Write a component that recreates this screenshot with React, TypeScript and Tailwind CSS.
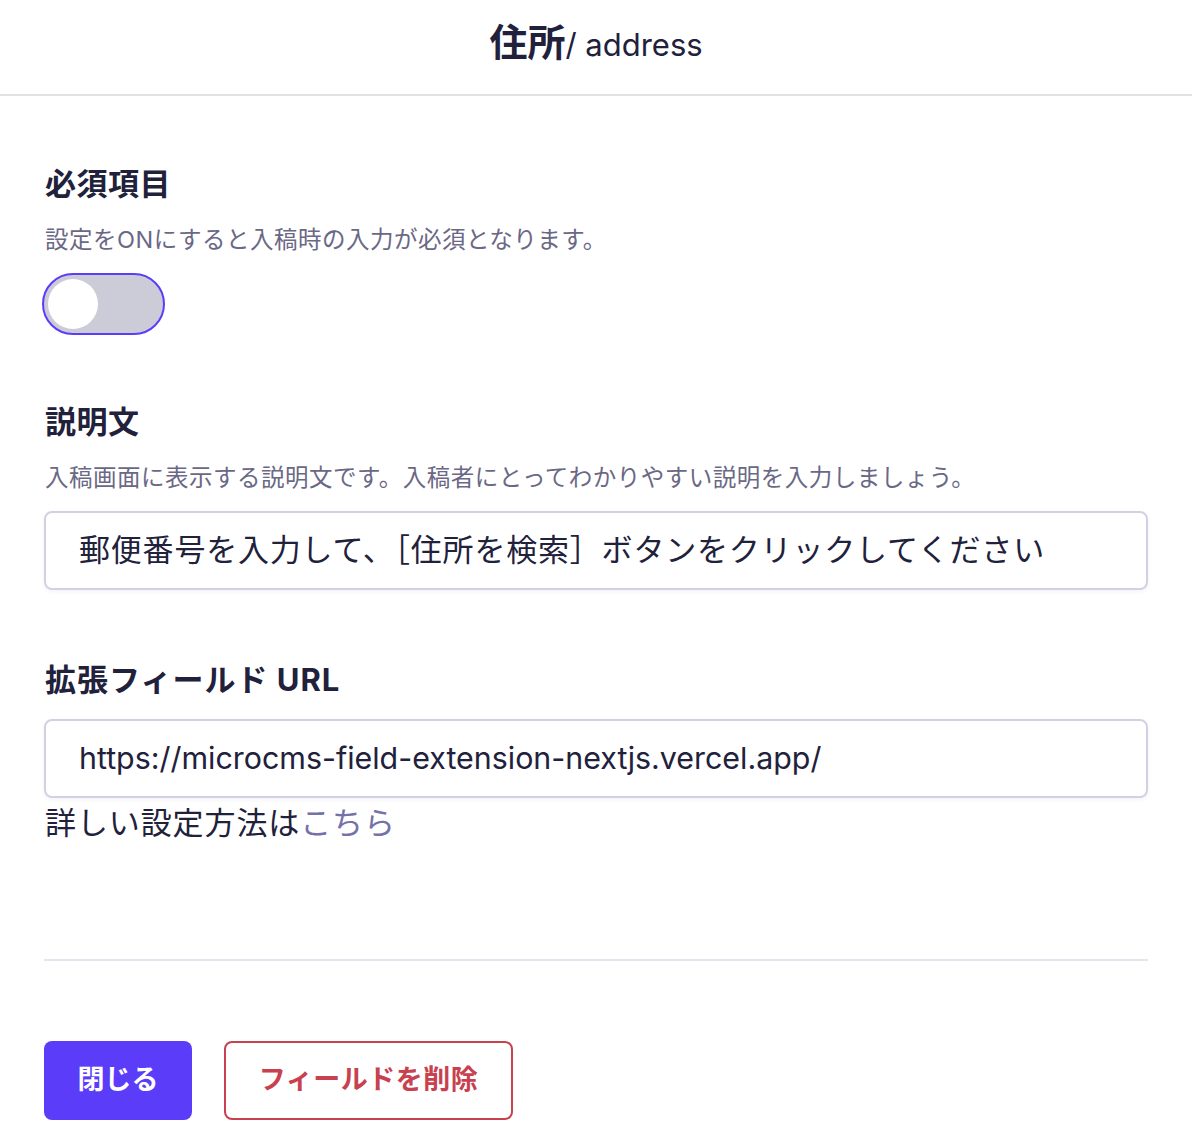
export default function App() {
  return (
    <div className="w-[1192px] bg-white text-[#21213b] font-['Inter','Noto_Sans_CJK_JP',sans-serif]">
      <header className="h-[96px] pb-[8px] border-b-2 border-[#e2e2e2] flex items-center justify-center">
        <h1 className="flex items-baseline">
          <span className="text-[38px] font-bold leading-[48px]">住所</span>
          <span className="text-[31px] leading-[48px]">/ address</span>
        </h1>
      </header>

      <main className="px-[44px] pt-[68px]">
        <section>
          <h2 className="text-[31px] font-bold leading-[40px] pl-[1px] tracking-[0.5px]">必須項目</h2>
          <p className="mt-[20px] text-[23.5px] leading-[32px] text-[#6a6885] pl-[1px] tracking-[0.5px]">
            設定をONにすると入稿時の入力が必須となります。
          </p>
          <button
            type="button"
            className="mt-[17px] -ml-[2px] w-[123px] h-[62px] rounded-full border-2 border-[#5b3cf9] bg-[#cccbd8] flex items-center px-[4px]"
          >
            <span className="w-[50px] h-[50px] rounded-full bg-white" />
          </button>
        </section>

        <section className="mt-[67px]">
          <h2 className="text-[31px] font-bold leading-[40px] pl-[1px] tracking-[0.5px]">説明文</h2>
          <p className="mt-[20px] text-[23.5px] leading-[32px] text-[#6a6885] pl-[1px] tracking-[0.5px]">
            入稿画面に表示する説明文です。入稿者にとってわかりやすい説明を入力しましょう。
          </p>
          <div className="mt-[17px] h-[79px] rounded-[8px] border-2 border-[#d3d0e4] shadow-[0_2px_4px_rgba(60,50,120,0.06)] flex items-center pl-[33px] text-[31px] tracking-[0.8px]">
            郵便番号を入力して、［住所を検索］ボタンをクリックしてください
          </div>
        </section>

        <section className="mt-[70px]">
          <h2 className="text-[31px] font-bold leading-[40px] pl-[1px] tracking-[1px]">拡張フィールド URL</h2>
          <div className="mt-[19px] h-[79px] rounded-[8px] border-2 border-[#d3d0e4] shadow-[0_2px_4px_rgba(60,50,120,0.06)] flex items-center pl-[33px] text-[30.4px]">
            https://microcms-field-extension-nextjs.vercel.app/
          </div>
          <p className="mt-[5px] text-[31px] leading-[40px] pl-[1px] tracking-[0.9px]">
            詳しい設定方法は<a className="text-[#7571aa]">こちら</a>
          </p>
        </section>

        <hr className="mt-[116px] border-0 h-[2px] bg-[#e5e4ef]" />

        <div className="mt-[80px] pb-[28px] flex gap-[32px]">
          <button
            type="button"
            className="w-[148px] h-[79px] rounded-[8px] bg-[#5b3cf9] text-white text-[27px] font-bold"
          >
            閉じる
          </button>
          <button
            type="button"
            className="w-[289px] h-[79px] rounded-[8px] border-2 border-[#c8414f] text-[#c8414f] text-[27px] font-bold tracking-[0.5px]"
          >
            フィールドを削除
          </button>
        </div>
      </main>
    </div>
  );
}
